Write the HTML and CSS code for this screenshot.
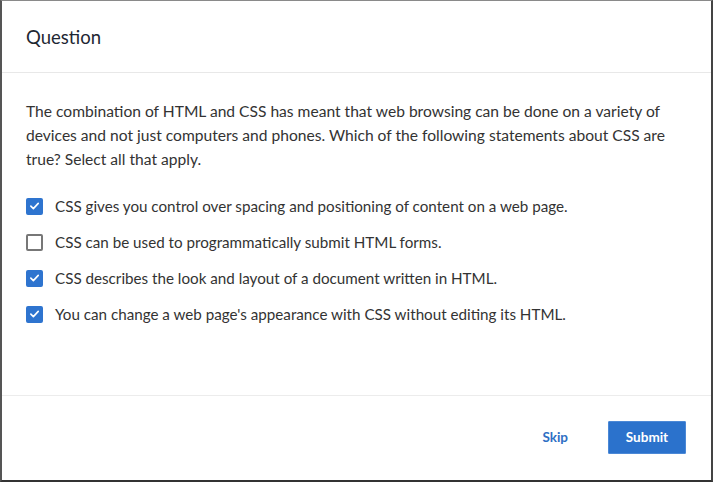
FILE: index.html
```html
<!DOCTYPE html>
<html>
<head>
<meta charset="utf-8">
<link rel="stylesheet" href="styles.css">
</head>
<body>
<div class="dialog">
  <div class="header"><h1 class="title">Question</h1></div>
  <div class="content">
    <p class="prompt">The combination of HTML and CSS has meant that web browsing can be done on a variety of devices and not just computers and phones. Which of the following statements about CSS are true? Select all that apply.</p>
    <ul class="options">
      <li class="option"><span class="box checked"><svg viewBox="0 0 16 16" width="16" height="16"><path d="M3.5 8.2 L6.6 11.2 L12.6 4.8" fill="none" stroke="#fff" stroke-width="2" stroke-linecap="round" stroke-linejoin="round"/></svg></span><span class="label">CSS gives you control over spacing and positioning of content on a web page.</span></li>
      <li class="option"><span class="box"></span><span class="label">CSS can be used to programmatically submit HTML forms.</span></li>
      <li class="option"><span class="box checked"><svg viewBox="0 0 16 16" width="16" height="16"><path d="M3.5 8.2 L6.6 11.2 L12.6 4.8" fill="none" stroke="#fff" stroke-width="2" stroke-linecap="round" stroke-linejoin="round"/></svg></span><span class="label">CSS describes the look and layout of a document written in HTML.</span></li>
      <li class="option"><span class="box checked"><svg viewBox="0 0 16 16" width="16" height="16"><path d="M3.5 8.2 L6.6 11.2 L12.6 4.8" fill="none" stroke="#fff" stroke-width="2" stroke-linecap="round" stroke-linejoin="round"/></svg></span><span class="label">You can change a web page's appearance with CSS without editing its HTML.</span></li>
    </ul>
  </div>
  <div class="footer">
    <button class="btn-skip">Skip</button>
    <button class="btn-submit">Submit</button>
  </div>
</div>
</body>
</html>
```
FILE: styles.css
```css
* { box-sizing: border-box; }
html, body { margin: 0; padding: 0; background: #fff; }
body { font-family: Lato, "Open Sans", sans-serif; color: #333; }
.dialog {
  width: 713px;
  height: 482px;
  border-top: 1px solid #8a8a8a;
  border-left: 2px solid #555;
  border-right: 2px solid #444;
  border-bottom: 2px solid #333;
  display: flex;
  flex-direction: column;
}
.header {
  height: 72px;
  border-bottom: 1px solid #e8e8e8;
  display: flex;
  align-items: center;
  padding: 0 24px;
}
.title {
  margin: 0;
  font-size: 18.5px;
  font-weight: 400;
  color: #1e2733;
}
.content {
  flex: 1;
  padding: 26px 41px 0 24px;
  border-bottom: 1px solid #ececec;
}
.prompt {
  margin: 0;
  font-size: 15.6px;
  line-height: 24px;
  color: #333;
}
.options {
  list-style: none;
  margin: 17px 0 0;
  padding: 0;
  display: flex;
  flex-direction: column;
}
.option {
  height: 36px;
  display: flex;
  align-items: center;
  font-size: 15.2px;
  color: #333;
}
.box {
  width: 17px;
  height: 17px;
  border: 2px solid #777;
  border-radius: 2px;
  margin-right: 12px;
  display: flex;
  align-items: center;
  justify-content: center;
  flex: none;
}
.box.checked {
  background: #2e74cf;
  border-color: #2e74cf;
}
.box svg { display: block; }
.footer {
  height: 84px;
  display: flex;
  align-items: center;
  justify-content: flex-end;
  padding: 0 25px 2px 0;
}
.btn-skip {
  background: none;
  border: none;
  font-family: inherit;
  font-weight: 700;
  font-size: 13.5px;
  color: #2e6fc4;
  padding: 0;
  margin-right: 40px;
}
.btn-submit {
  width: 78px;
  height: 33px;
  background: #2b72cc;
  border: 1px solid #4b88d6;
  color: #fff;
  font-family: inherit;
  font-weight: 700;
  font-size: 13.5px;
  border-radius: 1px;
}
```
